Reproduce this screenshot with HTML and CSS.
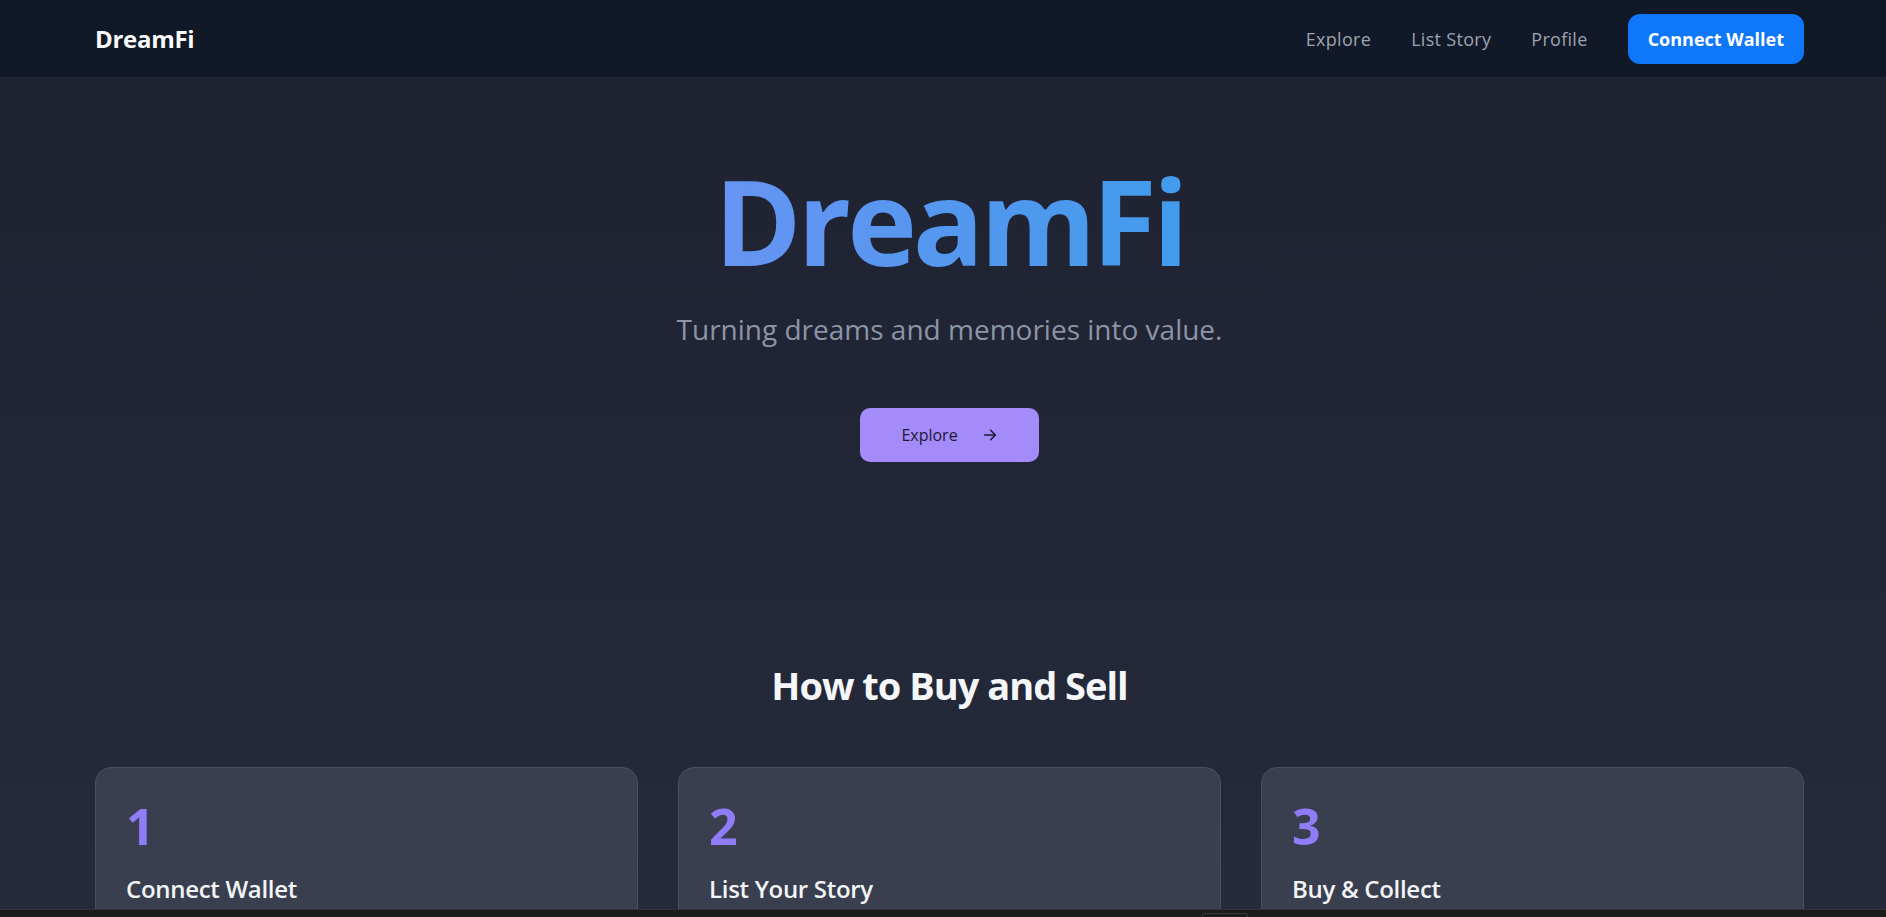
FILE: index.html
```html
<!DOCTYPE html>
<html lang="en">
<head>
    <meta charset="UTF-8">
    <meta name="viewport" content="width=device-width, initial-scale=1.0">
    <title>DreamFi</title>
    <link rel="stylesheet" href="styles.css">
</head>
<body>

    <header class="topbar">
        <div class="wrap topbar-inner">
            <a href="#" class="brand">DreamFi</a>
            <nav class="nav-links">
                <a href="#">Explore</a>
                <a href="#">List Story</a>
                <a href="#">Profile</a>
                <button class="wallet-btn">Connect Wallet</button>
            </nav>
        </div>
    </header>

    <main class="wrap">
        <section class="hero">
            <h1 class="hero-title">DreamFi</h1>
            <p class="hero-tagline">Turning dreams and memories into value.</p>
            <a href="#" class="explore-btn">
                Explore
                <svg width="16" height="16" viewBox="0 0 24 24" fill="none" stroke="currentColor" stroke-width="2.2" stroke-linecap="round" stroke-linejoin="round">
                    <path d="M4 12h16"/>
                    <path d="M13 5l7 7-7 7"/>
                </svg>
            </a>
        </section>

        <section class="steps">
            <h2>How to Buy and Sell</h2>
            <div class="step-grid">
                <div class="step-card">
                    <div class="step-num">1</div>
                    <h3>Connect Wallet</h3>
                </div>
                <div class="step-card">
                    <div class="step-num">2</div>
                    <h3>List Your Story</h3>
                </div>
                <div class="step-card">
                    <div class="step-num">3</div>
                    <h3>Buy &amp; Collect</h3>
                </div>
            </div>
        </section>
    </main>

    <!-- bottom dock strip -->
    <div class="dock"><span class="dock-tab"></span></div>

</body>
</html>
```

FILE: styles.css
```css
* {
    margin: 0;
    padding: 0;
    box-sizing: border-box;
}

body {
    font-family: 'Open Sans', 'Noto Sans', sans-serif;
    background: linear-gradient(to bottom, #1e2231 0%, #1e2231 10%, #262b3c 100%);
    color: #f3f4f6;
    min-height: 100vh;
}

a {
    text-decoration: none;
}

.wrap {
    padding: 0 82px 0 95px;
}

/* Top navigation */
.topbar {
    background: #111827;
    border-bottom: 1px solid #1f2937;
    height: 78px;
}

.topbar-inner {
    height: 100%;
    display: flex;
    justify-content: space-between;
    align-items: center;
}

.brand {
    font-size: 24px;
    font-weight: 700;
    color: #f9fafb;
    letter-spacing: -0.3px;
}

.nav-links {
    display: flex;
    align-items: center;
    gap: 40px;
}

.nav-links a {
    color: #9ca3af;
    font-size: 18px;
    letter-spacing: 0.3px;
}

.nav-links a:hover {
    color: #e5e7eb;
}

.wallet-btn {
    font-family: inherit;
    background: #0f77fa;
    color: white;
    border: none;
    border-radius: 12px;
    font-size: 18px;
    font-weight: 700;
    line-height: 28px;
    padding: 11px 20px;
    cursor: pointer;
}

/* Hero */
.hero {
    display: flex;
    flex-direction: column;
    align-items: center;
    padding-top: 84px;
}

.hero-title {
    font-size: 118px;
    line-height: 1;
    font-weight: 700;
    letter-spacing: -4px;
    background: linear-gradient(90deg, #6794f3, #419bec);
    -webkit-background-clip: text;
    background-clip: text;
    color: transparent;
}

.hero-tagline {
    margin-top: 29px;
    font-size: 28px;
    line-height: 40px;
    color: #8b95a7;
}

.explore-btn {
    margin-top: 59px;
    height: 54px;
    width: 179px;
    display: flex;
    align-items: center;
    justify-content: center;
    gap: 24px;
    background: #a38bfa;
    color: #1b1a33;
    border-radius: 10px;
    font-size: 16px;
    font-weight: 500;
}

/* How it works */
.steps h2 {
    margin-top: 199px;
    text-align: center;
    font-size: 38px;
    line-height: 48px;
    font-weight: 700;
    color: #f5f6f8;
    letter-spacing: -1px;
}

.step-grid {
    margin-top: 58px;
    display: grid;
    grid-template-columns: repeat(3, 1fr);
    gap: 40px;
}

.step-card {
    background: #393f4e;
    border: 1px solid #4a5060;
    border-radius: 16px;
    padding: 26px 30px 40px;
}

.step-num {
    font-size: 50px;
    line-height: 65px;
    font-weight: 700;
    color: #8f7cf6;
}

.step-card h3 {
    margin-top: 14px;
    font-size: 24px;
    line-height: 32px;
    font-weight: 600;
    color: #f3f4f6;
    letter-spacing: -0.3px;
}

/* dock strip along the window bottom */
.dock {
    position: fixed;
    left: 0;
    right: 0;
    bottom: 0;
    height: 8px;
    background: #1c1c1c;
    border-top: 1px solid #333;
    display: flex;
    align-items: flex-end;
}

.dock-tab {
    margin-left: 1202px;
    width: 46px;
    height: 4px;
    border: 1px solid #3a3a3a;
    border-bottom: none;
    border-radius: 3px 3px 0 0;
}
```
